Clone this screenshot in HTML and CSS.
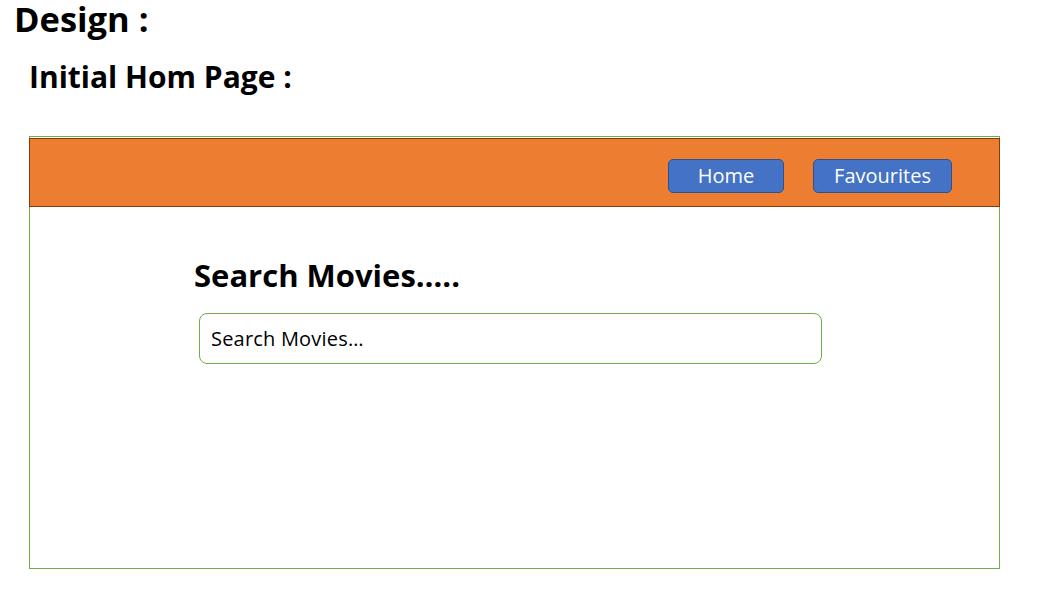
FILE: index.html
```html
<!DOCTYPE html>
<html>
<head>
<meta charset="utf-8">
<link rel="stylesheet" href="styles.css">
</head>
<body>
<h1 class="title">Design :</h1>
<h2 class="subtitle">Initial Hom Page :</h2>
<div class="frame">
  <div class="navbar">
    <button class="nav-btn home">Home</button>
    <button class="nav-btn fav">Favourites</button>
  </div>
  <div class="content">
    <h3 class="search-title">Search Movies…..</h3>
    <div class="search-box">Search Movies…</div>
  </div>
</div>
</body>
</html>
```
FILE: styles.css
```css
* { box-sizing: border-box; }
body {
  margin: 0;
  background: #fff;
  font-family: "Open Sans", Lato, sans-serif;
  color: #000;
}
.title {
  margin: 0;
  padding: 0 0 0 14px;
  font-size: 34.5px;
  font-weight: 700;
  line-height: 38px;
}
.subtitle {
  margin: 0;
  padding: 21px 0 0 29px;
  font-size: 30px;
  font-weight: 700;
  line-height: 36px;
}
.frame {
  margin: 41px 0 0 29px;
  width: 971px;
  height: 433px;
  border: 1px solid #70AD47;
}
.navbar {
  margin: 1px -1px 0 -1px;
  height: 69px;
  background: #ED7D31;
  border: 1px solid #843C0C;
  display: flex;
  justify-content: flex-end;
  align-items: flex-start;
  gap: 29px;
  padding: 20px 47px 0 0;
}
.nav-btn {
  height: 34px;
  background: #4472C4;
  border: 1px solid #2F528F;
  border-radius: 5px;
  color: #fff;
  font-family: inherit;
  font-size: 20px;
  line-height: 32px;
  padding: 0;
}
.home { width: 116px; }
.fav { width: 139px; }
.content {
  padding: 49px 0 0 164px;
}
.search-title {
  margin: 0;
  font-size: 31px;
  font-weight: 700;
  line-height: 38px;
}
.search-box {
  margin: 19px 0 0 5px;
  width: 623px;
  height: 51px;
  border: 1px solid #70AD47;
  border-radius: 8px;
  font-size: 20px;
  letter-spacing: 0.2px;
  line-height: 49px;
  padding-left: 11px;
}
```
